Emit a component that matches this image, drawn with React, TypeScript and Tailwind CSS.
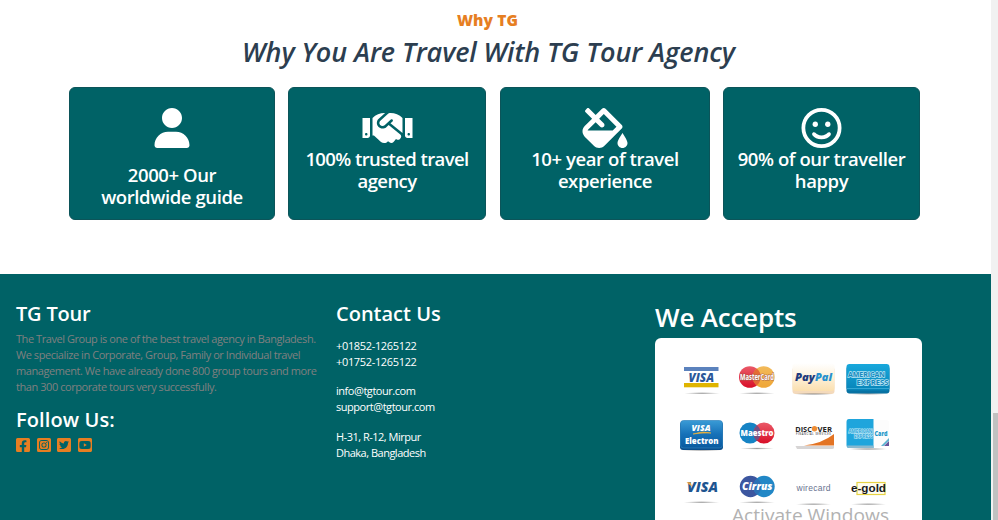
import type { ReactNode } from "react";
import {
  FaFillDrip,
  FaFacebookSquare,
  FaInstagramSquare,
  FaTwitterSquare,
  FaYoutubeSquare,
} from "react-icons/fa";

function UserIcon() {
  return (
    <svg viewBox="0 0 448 512" fill="currentColor" className="mb-4 h-10 w-9 shrink-0">
      <path d="M224 256c70.700 0 128-57.310 128-128s-57.300-128-128-128C153.300 0 96 57.310 96 128S153.300 256 224 256zM274.700 304H173.300C77.610 304 0 381.600 0 477.300c0 19.140 15.520 34.670 34.660 34.670h378.700C432.500 512 448 496.500 448 477.300C448 381.600 370.400 304 274.700 304z" />
    </svg>
  );
}

function HandshakeIcon() {
  return (
    <svg viewBox="0 0 640 512" fill="currentColor" className="h-10 w-[51px] shrink-0">
      <path d="M0 383.900l64 .04c17.750 0 32-14.290 32-32.030V128.300L0 128.300V383.900zM48 320.100c8.750 0 16 7.118 16 15.990c0 8.742-7.250 15.990-16 15.990S32 344.800 32 336.100C32 327.200 39.250 320.100 48 320.100zM348.800 64c-7.941 0-15.660 2.969-21.520 8.328L228.900 162.300C228.800 162.500 228.800 162.700 228.600 162.700C212 178.300 212.300 203.200 226.500 218.700c12.750 13.100 39.380 17.620 56.130 2.750C282.800 221.300 282.900 221.300 283 221.200l79.880-73.100c6.500-5.891 16.750-5.500 22.620 1c6 6.509 5.500 16.620-1 22.590l-26.120 23.870L504 313.700c2.857 2.496 5.506 5.078 7.992 7.719V127.100c-40.980-40.960-96.480-63.100-154.400-63.100L348.800 64zM334.600 217.400l-30 27.490c-29.750 27.110-75.250 24.490-101.800-4.371C176 211.200 178.100 165.700 207.300 138.900L289.100 64H282.500C224.700 64 169.100 87.080 128.200 127.900L128 351.800l18.250 .037l90.500 81.820c27.500 22.370 67.750 18.120 90-9.246l18.120 15.240c15.880 12.100 39.380 10.500 52.380-5.371l31.380-38.600l5.374 4.498c13.750 11 33.950 9.002 45-4.748l9.538-11.780c11.120-13.750 9.036-33.780-4.694-44.930L334.600 217.400zM544 128.400v223.600c0 17.620 14.250 32.050 32 32.050L640 384V128.100L544 128.400zM592 352c-8.750 0-16-7.246-16-15.990c0-8.875 7.250-15.990 16-15.990S608 327.200 608 336.100C608 344.800 600.800 352 592 352z" />
    </svg>
  );
}

function SmileIcon() {
  return (
    <svg viewBox="0 0 512 512" fill="currentColor" className="h-10 w-[41px] shrink-0">
      <circle cx="256" cy="256" r="232" fill="none" stroke="currentColor" strokeWidth="48" />
      <circle cx="176.400" cy="208" r="34" />
      <circle cx="336.400" cy="208" r="34" />
      <path d="M256 352C293.200 352 319.200 334.500 334.400 318.100C343.300 308.400 358.500 307.700 368.300 316.700C378 325.700 378.600 340.900 369.600 350.600C347.700 374.500 309.700 400 256 400C202.300 400 164.300 374.500 142.400 350.600C133.400 340.900 134 325.700 143.700 316.700C153.500 307.700 168.700 308.400 177.600 318.100C192.800 334.500 218.800 352 256 352z" />
    </svg>
  );
}

function Feature({ className, icon, lines }: { className: string; icon: ReactNode; lines: string[] }) {
  return (
    <div className={`flex h-[133px] flex-col items-center rounded-md border border-[#0c5459] bg-[#006266] pt-5 text-center text-[18.5px] font-semibold leading-[22px] text-white ${className}`}>
      {icon}
      {lines.map((line) => (
        <div key={line} className="whitespace-nowrap">{line}</div>
      ))}
    </div>
  );
}

function PaymentLogos() {
  return (
    <svg width="267" height="182" viewBox="655 338 267 182" className="block" fontFamily="'Open Sans', sans-serif" fontWeight="700">
      <defs>
        <linearGradient id="blue" x1="0" y1="0" x2="0" y2="1">
          <stop offset="0" stopColor="#3a9bd6" />
          <stop offset="0.5" stopColor="#1671b8" />
          <stop offset="1" stopColor="#0a5a9f" />
        </linearGradient>
        <linearGradient id="amex" x1="0" y1="0" x2="0" y2="1">
          <stop offset="0" stopColor="#18a8dc" />
          <stop offset="1" stopColor="#0784b8" />
        </linearGradient>
        <linearGradient id="cream" x1="0" y1="0" x2="0" y2="1">
          <stop offset="0" stopColor="#ffffff" />
          <stop offset="0.45" stopColor="#fdf3e0" />
          <stop offset="1" stopColor="#fbdfae" />
        </linearGradient>
        <linearGradient id="red" x1="0" y1="0" x2="0" y2="1">
          <stop offset="0" stopColor="#ea5a68" />
          <stop offset="1" stopColor="#d80f28" />
        </linearGradient>
        <linearGradient id="gold" x1="0" y1="0" x2="0" y2="1">
          <stop offset="0" stopColor="#f2ba5a" />
          <stop offset="1" stopColor="#efa636" />
        </linearGradient>
        <radialGradient id="shadow">
          <stop offset="0" stopColor="#777" stopOpacity="0.7" />
          <stop offset="1" stopColor="#777" stopOpacity="0" />
        </radialGradient>
      </defs>

      {/* Visa */}
      <rect x="684" y="367" width="34.500" height="4" fill="#5b82bd" />
      <rect x="684" y="383" width="34.500" height="4.300" fill="#dfb400" />
      <text x="688.500" y="381.500" fontSize="12" fontStyle="italic" fontWeight="800" fill="#2b5799" textLength="25.500" lengthAdjust="spacingAndGlyphs">VISA</text>
      <ellipse cx="702" cy="393.300" rx="18" ry="1.200" fill="url(#shadow)" />

      {/* MasterCard */}
      <circle cx="749.800" cy="377" r="10.800" fill="url(#red)" />
      <circle cx="763.700" cy="377" r="10.800" fill="url(#gold)" />
      <path d="M756.700 368.600a10.800 10.800 0 0 1 0 16.800a10.800 10.800 0 0 1 0-16.800z" fill="#e36a35" />
      <text x="740" y="380" fontSize="8" fill="#fff" stroke="#a65a4a" strokeWidth="1" paintOrder="stroke" textLength="34" lengthAdjust="spacingAndGlyphs">MasterCard</text>
      <ellipse cx="757" cy="393.300" rx="18" ry="1.200" fill="url(#shadow)" />

      {/* PayPal */}
      <rect x="792.500" y="367" width="42" height="27" rx="3" fill="#f0caa0" opacity="0.7" />
      <rect x="792.500" y="363" width="42" height="28" rx="3" fill="url(#cream)" />
      <ellipse cx="813.500" cy="394" rx="20" ry="1.300" fill="url(#shadow)" />
      <text x="795" y="381" fontSize="11" fontStyle="italic" fontWeight="800" fill="#1f3b7d" textLength="20" lengthAdjust="spacingAndGlyphs">Pay</text>
      <text x="815" y="381" fontSize="11" fontStyle="italic" fontWeight="800" fill="#2791cf" textLength="17" lengthAdjust="spacingAndGlyphs">Pal</text>

      {/* American Express */}
      <ellipse cx="868" cy="393.500" rx="21" ry="1.600" fill="url(#shadow)" />
      <rect x="846.500" y="366" width="43" height="27.500" rx="3" fill="#0872a3" />
      <rect x="846.500" y="364" width="43" height="26.500" rx="3" fill="url(#amex)" />
      <path d="M847 388.500h42" stroke="#54bfe5" strokeWidth="0.600" />
      <g fill="#1689bd" stroke="#b8e4f4" strokeWidth="1.300" paintOrder="stroke">
        <text x="848" y="376.500" fontSize="7" textLength="37" lengthAdjust="spacingAndGlyphs">AMERICAN</text>
        <text x="856.500" y="384.800" fontSize="7" textLength="32" lengthAdjust="spacingAndGlyphs">EXPRESS</text>
      </g>

      {/* Visa Electron */}
      <ellipse cx="701.500" cy="450" rx="21" ry="1.500" fill="url(#shadow)" />
      <rect x="680" y="422" width="43" height="28" rx="3" fill="#0a4e8c" />
      <rect x="680.500" y="420.500" width="42" height="27.500" rx="3" fill="url(#blue)" stroke="#2f83bd" strokeWidth="0.700" />
      <text x="691.500" y="431" fontSize="8" fontStyle="italic" fontWeight="800" fill="#fff" textLength="19" lengthAdjust="spacingAndGlyphs">VISA</text>
      <path d="M693 434q10-3.500 18-1q-8-.5-18 1z" fill="#efb23a" stroke="#efb23a" strokeWidth="0.600" />
      <text x="685" y="443.500" fontSize="8" fontWeight="800" fill="#fff" textLength="33.500" lengthAdjust="spacingAndGlyphs">Electron</text>

      {/* Maestro */}
      <circle cx="750" cy="433" r="10.500" fill="#1683c4" />
      <circle cx="764" cy="433" r="10.500" fill="url(#red)" />
      <path d="M757 425.200a10.500 10.500 0 0 1 0 15.600a10.500 10.500 0 0 1 0-15.600z" fill="#754f82" />
      <text x="740.500" y="436.300" fontSize="8.800" fontWeight="800" fill="#fff" textLength="33" lengthAdjust="spacingAndGlyphs">Maestro</text>
      <ellipse cx="757" cy="448.500" rx="17" ry="1.200" fill="url(#shadow)" />

      {/* Discover */}
      <path d="M834 434v11.500h-30q18-2 30-11.500z" fill="#e37424" />
      <path d="M795.500 446h38.500v1.500q0 1.500-2 1.500h-35z" fill="#d7d5d5" />
      <text x="795.300" y="431.500" fontSize="7.400" fontWeight="700" fill="#252525" textLength="16.500" lengthAdjust="spacingAndGlyphs">DISC</text>
      <circle cx="814.500" cy="428.800" r="2.700" fill="#ee8d35" />
      <text x="817.500" y="431.500" fontSize="7.400" fontWeight="700" fill="#252525" textLength="14.500" lengthAdjust="spacingAndGlyphs">VER</text>
      <text x="796" y="435" fontSize="2.500" fontWeight="600" fill="#444" textLength="34.500" lengthAdjust="spacing">FINANCIAL SERVICES</text>

      {/* American Express card */}
      <ellipse cx="868" cy="449" rx="20" ry="1.500" fill="url(#shadow)" />
      <path d="M873.500 420h13q2.500 0 2.500 2.500v21q0 3-3 3h-12.500z" fill="#fcfcfc" />
      <path d="M849 419h24.500v29H849q-2.500 0-2.500-3v-23q0-3 2.500-3z" fill="#1fa5dc" />
      <path d="M847 445.500h26.500v2.500H849q-2 0-2-2.500z" fill="#89b9cf" />
      <g fill="#2ba5da" stroke="#c5ebf7" strokeWidth="1" paintOrder="stroke">
        <text x="848.500" y="432.600" fontSize="4.600" textLength="24" lengthAdjust="spacingAndGlyphs">AMERICAN</text>
        <text x="854" y="437.500" fontSize="4.600" textLength="19" lengthAdjust="spacingAndGlyphs">EXPRESS</text>
      </g>
      <text x="874.500" y="435.500" fontSize="6" fontWeight="800" fill="#1997c9" textLength="13" lengthAdjust="spacingAndGlyphs">Card</text>
      <path d="M881 446l8-8v2.500l-5.500 5.500z" fill="#5bb2d0" />
      <path d="M884 446l5-5v5z" fill="#64549b" />

      {/* Visa plain */}
      <text x="687" y="492" fontSize="14" fontStyle="italic" fontWeight="800" fill="#1e5590" textLength="31" lengthAdjust="spacingAndGlyphs">VISA</text>
      <path d="M686.500 482.200h4l1.500 4.500z" fill="#eea43b" />
      <ellipse cx="701.500" cy="502.300" rx="18" ry="1.200" fill="url(#shadow)" />

      {/* Cirrus */}
      <circle cx="750.500" cy="486.500" r="10.700" fill="#3c569f" />
      <circle cx="764" cy="486.500" r="10.700" fill="#2187c6" />
      <path d="M757.300 478.200a10.700 10.700 0 0 1 0 16.600a10.700 10.700 0 0 1 0-16.600z" fill="#2c71b5" />
      <text x="742" y="490" fontSize="10" fontStyle="italic" fontWeight="800" fill="#fff" textLength="30.500" lengthAdjust="spacingAndGlyphs">Cirrus</text>
      <ellipse cx="757" cy="502.300" rx="18" ry="1.200" fill="url(#shadow)" />

      {/* Wirecard and e-gold */}
      <text x="796.500" y="491" fontSize="8.500" fontFamily="'Liberation Sans', sans-serif" fontWeight="400" fill="#68728f" textLength="34" lengthAdjust="spacing">wirecard</text>
      <ellipse cx="813.500" cy="504.200" rx="18" ry="1.200" fill="url(#shadow)" />
      <rect x="857" y="482.500" width="28" height="12" fill="#fffdf0" stroke="#e7d344" strokeWidth="1.200" />
      <text x="851" y="492.200" fontSize="11.500" fontFamily="'Liberation Sans', sans-serif" fontWeight="700" fill="#19191c" textLength="35" lengthAdjust="spacingAndGlyphs">e-gold</text>
      <ellipse cx="868.500" cy="504.200" rx="18" ry="1.200" fill="url(#shadow)" />

      <text x="732" y="521.500" fontSize="19" fontWeight="400" fill="#b2b2b2" textLength="157" lengthAdjust="spacingAndGlyphs">Activate Windows</text>
    </svg>
  );
}

export default function App() {
  return (
    <div className="flex h-[520px] w-[998px] overflow-hidden bg-white font-['Open_Sans',sans-serif]">
      <main className="w-[991px] shrink-0">
        <section className="h-[274px] pt-2">
          <div className="w-[975px] text-center">
            <p className="text-[15.5px] font-extrabold leading-6 tracking-[0.1px] text-[#e67e22]">Why TG</p>
            <h1 className="mt-[3px] whitespace-nowrap pl-0.5 text-[27px] font-semibold italic leading-[34px] tracking-[-0.1px] text-[#2c3e50]">Why You Are Travel With TG Tour Agency</h1>
          </div>
          <div className="ml-[69px] mt-[18px] flex">
            <Feature className="w-[206px] tracking-[-0.4px]" icon={<UserIcon />} lines={["2000+ Our", "worldwide guide"]} />
            <Feature className="ml-[13px] w-[198px] tracking-[-0.6px]" icon={<HandshakeIcon />} lines={["100% trusted travel", "agency"]} />
            <Feature className="ml-[14px] w-[210px] tracking-[-0.42px]" icon={<FaFillDrip className="h-10 w-[46px] shrink-0" />} lines={["10+ year of travel", "experience"]} />
            <Feature className="ml-[13px] w-[197px] tracking-[-0.42px]" icon={<SmileIcon />} lines={["90% of our traveller", "happy"]} />
          </div>
        </section>
        <footer className="flex h-[246px] bg-[#006266] pl-4 text-white">
          <div className="w-80 pt-[26px]">
            <h2 className="text-xl font-semibold leading-7 tracking-[-0.2px]">TG Tour</h2>
            <p className="mt-[3px] whitespace-nowrap text-[11px] leading-4 tracking-[-0.44px] text-[#808080]">The Travel Group is one of the best travel agency in Bangladesh.<br />We specialize in Corporate, Group, Family or Individual travel<br />management. We have already done 800 group tours and more<br />than 300 corporate tours very successfully.</p>
            <h2 className="mt-[11px] text-xl font-semibold leading-7 tracking-[0.1px]">Follow Us:</h2>
            <div className="mt-[3px] flex gap-[6.700px] text-[#e67e22]">
              <FaFacebookSquare className="h-4 w-[14px]" />
              <FaInstagramSquare className="h-4 w-[14px]" />
              <FaTwitterSquare className="h-4 w-[14px]" />
              <FaYoutubeSquare className="h-4 w-[14px]" />
            </div>
          </div>
          <div className="w-[319px] pt-[26px]">
            <h2 className="text-xl font-semibold leading-7">Contact Us</h2>
            <div className="mt-2.5 text-[11px] leading-4">
              <p className="tracking-[-0.34px]">+01852-1265122<br />+01752-1265122</p>
              <p className="mt-[13px] tracking-[-0.46px]">info@tgtour.com<br />support@tgtour.com</p>
              <p className="mt-3.5 tracking-[-0.5px]">H-31, R-12, Mirpur<br />Dhaka, Bangladesh</p>
            </div>
          </div>
          <div className="w-[267px] pt-[26px]">
            <h2 className="text-[26px] font-semibold leading-[34px] tracking-[-0.2px]">We Accepts</h2>
            <div className="mt-1 h-[182px] overflow-hidden rounded-t-md bg-white"><PaymentLogos /></div>
          </div>
        </footer>
      </main>
      <aside className="flex w-[7px] justify-end bg-[#f1f1f1]">
        <div className="mt-[413px] h-[107px] w-[5px] bg-[#c1c1c1]" />
      </aside>
    </div>
  );
}
